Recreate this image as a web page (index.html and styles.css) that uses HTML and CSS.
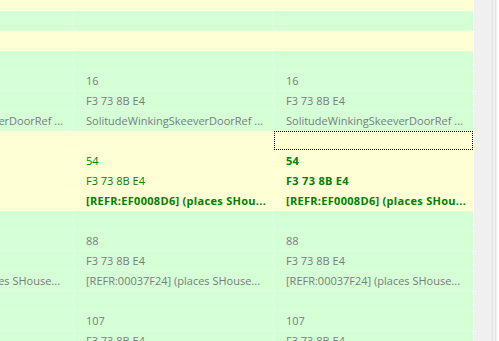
FILE: index.html
```html
<!DOCTYPE html>
<html>
<head>
<meta charset="utf-8">
<link rel="stylesheet" href="styles.css">
</head>
<body>
<div class="view">
  <div class="grid">
    <div class="rows">
      <div class="row y"><div class="cell"></div><div class="cell"></div><div class="cell"></div></div>
      <div class="row g"><div class="cell"></div><div class="cell"></div><div class="cell"></div></div>
      <div class="row y"><div class="cell"></div><div class="cell"></div><div class="cell"></div></div>
      <div class="row g"><div class="cell"></div><div class="cell"></div><div class="cell"></div></div>
      <div class="row g"><div class="cell">16</div><div class="cell">16</div><div class="cell">16</div></div>
      <div class="row g"><div class="cell">F3 73 8B E4</div><div class="cell">F3 73 8B E4</div><div class="cell">F3 73 8B E4</div></div>
      <div class="row g"><div class="cell">SolitudeWinkingSkeeverDoorRef ...</div><div class="cell">SolitudeWinkingSkeeverDoorRef ...</div><div class="cell">SolitudeWinkingSkeeverDoorRef ...</div></div>
      <div class="row y"><div class="cell"></div><div class="cell"></div><div class="cell focus"></div></div>
      <div class="row y hl"><div class="cell">54</div><div class="cell">54</div><div class="cell b">54</div></div>
      <div class="row y hl"><div class="cell">F3 73 8B E4</div><div class="cell">F3 73 8B E4</div><div class="cell b">F3 73 8B E4</div></div>
      <div class="row y hl"><div class="cell"></div><div class="cell b">[REFR:EF0008D6] (places SHou...</div><div class="cell b">[REFR:EF0008D6] (places SHou...</div></div>
      <div class="row g"><div class="cell"></div><div class="cell"></div><div class="cell"></div></div>
      <div class="row g"><div class="cell">88</div><div class="cell">88</div><div class="cell">88</div></div>
      <div class="row g"><div class="cell">F3 73 8B E4</div><div class="cell">F3 73 8B E4</div><div class="cell">F3 73 8B E4</div></div>
      <div class="row g"><div class="cell">[REFR:00037F24] (places SHouse...</div><div class="cell">[REFR:00037F24] (places SHouse...</div><div class="cell">[REFR:00037F24] (places SHouse...</div></div>
      <div class="row g"><div class="cell"></div><div class="cell"></div><div class="cell"></div></div>
      <div class="row g"><div class="cell">107</div><div class="cell">107</div><div class="cell">107</div></div>
      <div class="row g"><div class="cell">F3 73 8B E4</div><div class="cell">F3 73 8B E4</div><div class="cell">F3 73 8B E4</div></div>
    </div>
  </div>
  <div class="edge"></div>
</div>
</body>
</html>
```

FILE: styles.css
```css
html, body {
  margin: 0;
  padding: 0;
  background: #f0f0f0;
}
.view {
  display: flex;
  width: 499px;
  height: 341px;
  overflow: hidden;
}
.grid {
  flex: none;
  width: 474px;
  height: 341px;
  overflow: hidden;
}
.rows {
  margin-left: -126px;
  margin-top: -9px;
  width: 600px;
}
.row {
  display: flex;
  height: 20px;
}
.row.y { background: #ffffd5; }
.row.g { background: #d5ffd5; }
.cell {
  position: relative;
  flex: none;
  box-sizing: border-box;
  width: 200px;
  height: 20px;
  padding-left: 12px;
  border-right: 1px dotted #ffffff;
  border-bottom: 1px dotted #ffffff;
  font-family: "Open Sans", sans-serif;
  font-size: 11px;
  line-height: 19px;
  color: #7b7b7f;
  white-space: nowrap;
  overflow: hidden;
}
.row.hl .cell { color: #008000; }
.cell.b {
  font-weight: bold;
  letter-spacing: 0.3px;
}
.cell.focus::after {
  content: "";
  position: absolute;
  left: 0;
  top: 0;
  right: 0;
  bottom: 0;
  border: 1px dotted #000;
}
.edge {
  flex: none;
  width: 25px;
  height: 341px;
  box-sizing: border-box;
  background: #f0f0f0;
  border-right: 2px solid #fdfdfd;
}
.edge::before {
  content: "";
  display: block;
  margin-left: 18px;
  width: 1px;
  height: 341px;
  background: #e3e3e3;
  box-shadow: 2px 0 0 #f6f6f6, 3px 0 0 #e3e3e3;
}
```
